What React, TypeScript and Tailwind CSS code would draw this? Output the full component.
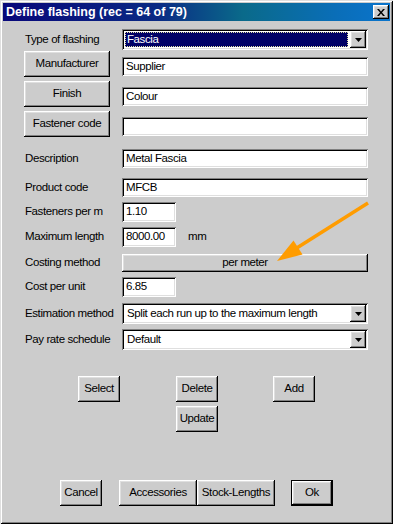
import React from "react";

const raised =
  "shadow-[inset_-1px_-1px_0_#000,inset_1px_1px_0_#fff,inset_-2px_-2px_0_#808080,inset_2px_2px_0_#dfdfdf]";
const sunken =
  "shadow-[inset_1px_1px_0_#808080,inset_-1px_-1px_0_#fff,inset_2px_2px_0_#000,inset_-2px_-2px_0_#dfdfdf]";

function Btn({ children, className = "" }: { children?: React.ReactNode; className?: string }) {
  return (
    <div className={`flex shrink-0 items-center justify-center bg-[#cccccc] ${raised} ${className}`}>
      {children}
    </div>
  );
}

function Field({ value, className = "w-[246px]" }: { value?: string; className?: string }) {
  return (
    <div className={`flex h-[19px] shrink-0 items-center bg-white pl-[4px] ${sunken} ${className}`}>
      {value}
    </div>
  );
}

function Arrow() {
  return (
    <svg width="7" height="4" viewBox="0 0 7 4">
      <path d="M0 0h7L3.5 4z" fill="#000" />
    </svg>
  );
}

function Combo({ value, focused }: { value: string; focused?: boolean }) {
  return (
    <div className={`flex h-[21px] w-[246px] shrink-0 items-center bg-white ${sunken}`}>
      {focused ? (
        <div className="ml-[3px] flex h-[15px] flex-1 items-center border border-dotted border-[#e0e0a0] bg-[#000066] pl-[1px] text-white">
          {value}
        </div>
      ) : (
        <div className="ml-[3px] flex h-[15px] flex-1 items-center pl-[2px]">{value}</div>
      )}
      <Btn className="mr-[2px] ml-[2px] h-[17px] w-[16px]">
        <Arrow />
      </Btn>
    </div>
  );
}

function Row({ className, label, children }: { className: string; label?: React.ReactNode; children?: React.ReactNode }) {
  return (
    <div className={`flex items-center ${className}`}>
      <div className="ml-[25px] w-[97px] shrink-0">{label}</div>
      {children}
    </div>
  );
}

export default function App() {
  return (
    <div
      className={`relative h-[524px] w-[393px] overflow-hidden bg-[#cccccc] text-[11.5px] tracking-[-0.4px] text-black shadow-[inset_1px_1px_0_#dfdfdf,inset_-1px_-1px_0_#000,inset_2px_2px_0_#fff,inset_-2px_-2px_0_#808080]`}
      style={{ fontFamily: '"Liberation Sans", Arial, sans-serif' }}
    >
      <div className="mx-[3px] mt-[3px] flex h-[18px] items-center justify-between bg-[linear-gradient(to_right,#08087a_0%,#0a2a84_40%,#0a6a8a_62%,#0a6eb8_86%,#0a74cc_100%)] pl-[3px] pr-[1px]">
        <span className="text-[12.5px] font-bold tracking-normal text-white">Define flashing (rec = 64 of 79)</span>
        <Btn className="h-[14px] w-[16px]">
          <svg width="8" height="7" viewBox="0 0 8 7">
            <path d="M0 0h2l2 2.5L6 0h2L5 3.5 8 7H6L4 4.5 2 7H0l3-3.5z" fill="#000" />
          </svg>
        </Btn>
      </div>

      <Row className="mt-[8px] h-[21px]" label="Type of flashing">
        <Combo value="Fascia" focused />
      </Row>

      <div className="mt-[1px] flex h-[26px] items-end">
        <Btn className="ml-[24px] h-[26px] w-[86px]">Manufacturer</Btn>
        <div className="ml-[12px] mb-[1px]">
          <Field value="Supplier" />
        </div>
      </div>
      <div className="mt-[4px] flex h-[26px] items-end">
        <Btn className="ml-[24px] h-[26px] w-[86px]">Finish</Btn>
        <div className="ml-[12px] mb-[1px]">
          <Field value="Colour" />
        </div>
      </div>
      <div className="mt-[4px] flex h-[26px] items-end">
        <Btn className="ml-[24px] h-[26px] w-[86px]">Fastener code</Btn>
        <div className="ml-[12px] mb-[1px]">
          <Field />
        </div>
      </div>

      <Row className="mt-[12px] h-[19px]" label="Description">
        <Field value="Metal Fascia" />
      </Row>
      <Row className="mt-[10px] h-[19px]" label="Product code">
        <Field value="MFCB" />
      </Row>
      <Row className="mt-[5px] h-[20px]" label="Fasteners per m">
        <Field value="1.10" className="h-[20px] w-[54px]" />
      </Row>
      <Row className="mt-[5px] h-[20px]" label="Maximum length">
        <Field value="8000.00" className="h-[20px] w-[54px]" />
        <span className="ml-[12px]">mm</span>
      </Row>
      <Row className="mt-[7px] h-[18px]" label="Costing method">
        <Btn className="h-[18px] w-[246px]">per meter</Btn>
      </Row>
      <Row className="mt-[5px] h-[20px]" label="Cost per unit">
        <Field value="6.85" className="h-[20px] w-[54px]" />
      </Row>
      <Row className="mt-[6px] h-[21px]" label="Estimation method">
        <Combo value="Split each run up to the maximum length" />
      </Row>
      <Row className="mt-[5px] h-[21px]" label="Pay rate schedule">
        <Combo value="Default" />
      </Row>

      <div className="mt-[26px] flex h-[26px]">
        <Btn className="ml-[78px] h-[26px] w-[42px]">Select</Btn>
        <Btn className="ml-[56px] h-[26px] w-[42px]">Delete</Btn>
        <Btn className="ml-[55px] h-[26px] w-[42px]">Add</Btn>
      </div>
      <div className="mt-[4px] flex h-[26px]">
        <Btn className="ml-[176px] h-[26px] w-[42px]">Update</Btn>
      </div>

      <div className="mt-[48px] flex h-[26px]">
        <Btn className="ml-[60px] h-[26px] w-[42px]">Cancel</Btn>
        <Btn className="ml-[17px] h-[26px] w-[78px]">Accessories</Btn>
        <Btn className="h-[26px] w-[78px]">Stock-Lengths</Btn>
        <div className="ml-[16px] h-[26px] w-[42px] border border-black">
          <Btn className="h-full w-full">Ok</Btn>
        </div>
      </div>

      <svg className="pointer-events-none absolute top-0 left-0" width="393" height="524">
        <line x1="368" y1="203" x2="292" y2="251" stroke="#ff9c00" strokeWidth="3.5" />
        <path d="M277 261 L293.5 240.5 L302.5 254.5 Z" fill="#ff9c00" />
      </svg>
    </div>
  );
}
